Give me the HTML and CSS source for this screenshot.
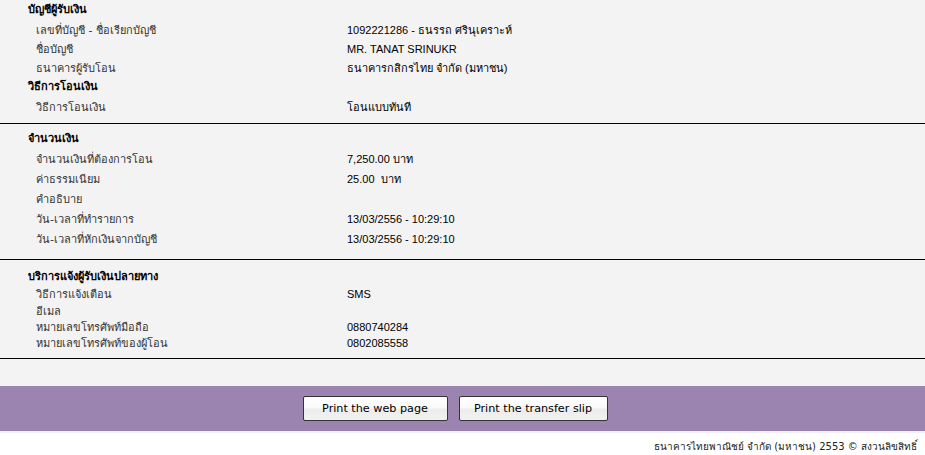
FILE: index.html
```html
<!DOCTYPE html>
<html lang="th">
<head>
    <meta charset="UTF-8">
    <meta name="viewport" content="width=device-width, initial-scale=1.0">
    <title>ยืนยันการโอนเงิน</title>
    <link rel="stylesheet" href="styles.css">
</head>
<body>
    <div class="content">
        <!-- Receiver account -->
        <div class="section first">
            <div class="section-title">บัญชีผู้รับเงิน</div>
            <div class="row"><span class="label">เลขที่บัญชี - ชื่อเรียกบัญชี</span><span class="value">1092221286 - ธนรรถ ศรินุเคราะห์</span></div>
            <div class="row"><span class="label">ชื่อบัญชี</span><span class="value">MR. TANAT SRINUKR</span></div>
            <div class="row"><span class="label">ธนาคารผู้รับโอน</span><span class="value">ธนาคารกสิกรไทย จำกัด (มหาชน)</span></div>
            <div class="section-title">วิธีการโอนเงิน</div>
            <div class="row tall"><span class="label">วิธีการโอนเงิน</span><span class="value">โอนแบบทันที</span></div>
        </div>

        <!-- Amount -->
        <div class="section">
            <div class="section-title">จำนวนเงิน</div>
            <div class="row tall"><span class="label">จำนวนเงินที่ต้องการโอน</span><span class="value">7,250.00 บาท</span></div>
            <div class="row tall"><span class="label">ค่าธรรมเนียม</span><span class="value">25.00&nbsp; บาท</span></div>
            <div class="row tall"><span class="label">คำอธิบาย</span><span class="value"></span></div>
            <div class="row tall"><span class="label">วัน-เวลาที่ทำรายการ</span><span class="value">13/03/2556 - 10:29:10</span></div>
            <div class="row tall"><span class="label">วัน-เวลาที่หักเงินจากบัญชี</span><span class="value">13/03/2556 - 10:29:10</span></div>
        </div>

        <!-- Notify receiver -->
        <div class="section last">
            <div class="section-title">บริการแจ้งผู้รับเงินปลายทาง</div>
            <div class="row compact"><span class="label">วิธีการแจ้งเตือน</span><span class="value">SMS</span></div>
            <div class="row short"><span class="label">อีเมล</span><span class="value"></span></div>
            <div class="row short"><span class="label">หมายเลขโทรศัพท์มือถือ</span><span class="value">0880740284</span></div>
            <div class="row short"><span class="label">หมายเลขโทรศัพท์ของผู้โอน</span><span class="value">0802085558</span></div>
        </div>
    </div>

    <div class="button-bar">
        <button class="print-button web">Print the web page</button>
        <button class="print-button slip">Print the transfer slip</button>
    </div>

    <div class="footer">ธนาคารไทยพาณิชย์ จำกัด (มหาชน) 2553 © สงวนลิขสิทธิ์</div>
</body>
</html>
```

FILE: styles.css
```css
/* General Styles */
body {
    font-family: Tahoma, "DejaVu Sans", sans-serif;
    font-size: 11px;
    margin: 0;
    padding: 0;
    background-color: #ffffff;
    color: #333;
}

.content {
    background-color: #f3f3f3;
    padding-bottom: 27px;
}

/* Sections */
.section {
    border-bottom: 1px solid #000;
    padding: 5px 0 10px 0;
}

.section.first {
    padding: 0 0 6px 0;
}

.section.last {
    padding: 6px 0 7px 0;
}

.section-title {
    font-weight: bold;
    color: #000;
    height: 20px;
    line-height: 20px;
    padding-left: 28px;
}

.section.last .section-title {
    height: 19px;
    line-height: 21px;
}

.row {
    display: flex;
    align-items: center;
    height: 19px;
}

.row.tall {
    height: 20px;
}

.row.compact {
    height: 18px;
}

.row.short {
    height: 16px;
}

.label {
    width: 311px;
    padding-left: 36px;
    flex-shrink: 0;
}

.value {
    font-family: Arial, "Liberation Sans", sans-serif;
    font-size: 11px;
    color: #000;
}

/* Buttons */
.button-bar {
    background-color: #9b84b0;
    height: 45px;
    display: flex;
    justify-content: center;
    align-items: center;
    gap: 11px;
    padding-right: 15px;
    border-bottom: 2px solid #f0f0f0;
}

.print-button {
    font-family: Verdana, "DejaVu Sans", sans-serif;
    font-size: 11.2px;
    color: #000;
    height: 25px;
    padding: 0;
    border: 1px solid #333;
    border-radius: 2px;
    background: linear-gradient(#ffffff 0%, #fafafa 45%, #ececec 55%, #f2f2f2 100%);
    cursor: pointer;
}

.print-button.web {
    width: 145px;
}

.print-button.slip {
    width: 149px;
}

.footer {
    text-align: right;
    padding: 6px 8px 0 0;
    font-size: 10px;
    color: #222;
}
```
